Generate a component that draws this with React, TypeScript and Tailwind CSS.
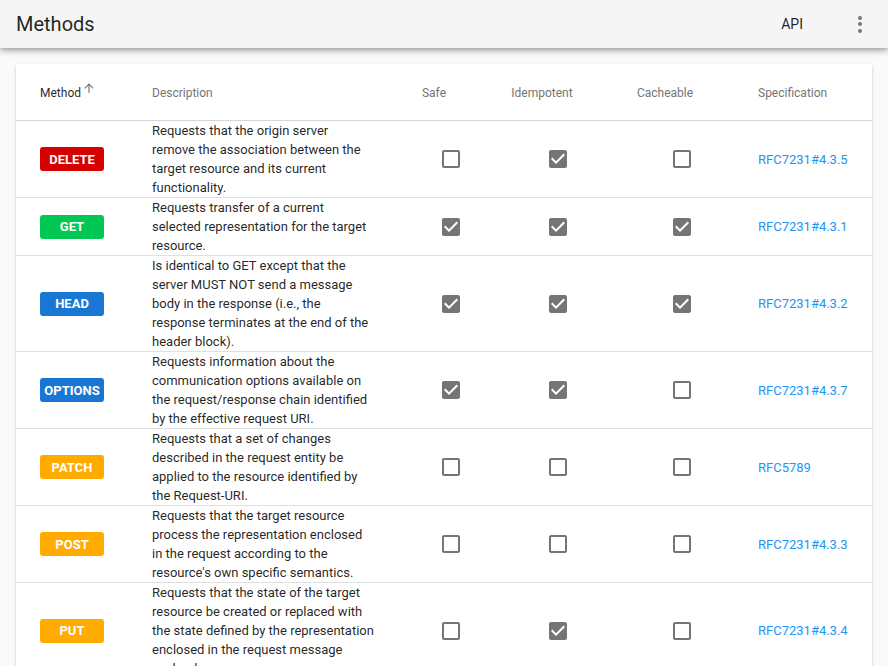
import React from "react";

type Row = {
  method: string;
  color: string;
  desc: string;
  safe: boolean;
  idem: boolean;
  cache: boolean;
  spec: string;
};

const rows: Row[] = [
  {
    method: "DELETE",
    color: "bg-[#d50000]",
    desc: "Requests that the origin server remove the association between the target resource and its current functionality.",
    safe: false,
    idem: true,
    cache: false,
    spec: "RFC7231#4.3.5",
  },
  {
    method: "GET",
    color: "bg-[#00c853]",
    desc: "Requests transfer of a current selected representation for the target resource.",
    safe: true,
    idem: true,
    cache: true,
    spec: "RFC7231#4.3.1",
  },
  {
    method: "HEAD",
    color: "bg-[#1976d2]",
    desc: "Is identical to GET except that the server MUST NOT send a message body in the response (i.e., the response terminates at the end of the header block).",
    safe: true,
    idem: true,
    cache: true,
    spec: "RFC7231#4.3.2",
  },
  {
    method: "OPTIONS",
    color: "bg-[#1976d2]",
    desc: "Requests information about the communication options available on the request/response chain identified by the effective request URI.",
    safe: true,
    idem: true,
    cache: false,
    spec: "RFC7231#4.3.7",
  },
  {
    method: "PATCH",
    color: "bg-[#ffab00]",
    desc: "Requests that a set of changes described in the request entity be applied to the resource identified by the Request-URI.",
    safe: false,
    idem: false,
    cache: false,
    spec: "RFC5789",
  },
  {
    method: "POST",
    color: "bg-[#ffab00]",
    desc: "Requests that the target resource process the representation enclosed in the request according to the resource's own specific semantics.",
    safe: false,
    idem: false,
    cache: false,
    spec: "RFC7231#4.3.3",
  },
  {
    method: "PUT",
    color: "bg-[#ffab00]",
    desc: "Requests that the state of the target resource be created or replaced with the state defined by the representation enclosed in the request message payload.",
    safe: false,
    idem: true,
    cache: false,
    spec: "RFC7231#4.3.4",
  },
];

function Check({ on }: { on: boolean }) {
  return (
    <svg width="24" height="24" viewBox="0 0 24 24" className="fill-[#757575]">
      {on ? (
        <path d="M19 3H5c-1.11 0-2 .9-2 2v14c0 1.1.89 2 2 2h14c1.11 0 2-.9 2-2V5c0-1.1-.89-2-2-2zm-9 14l-5-5 1.41-1.41L10 14.17l7.59-7.59L19 8l-9 9z" />
      ) : (
        <path d="M19 5v14H5V5h14m0-2H5c-1.1 0-2 .9-2 2v14c0 1.1.9 2 2 2h14c1.1 0 2-.9 2-2V5c0-1.1-.9-2-2-2z" />
      )}
    </svg>
  );
}

const cols = "grid grid-cols-[120px_256px_118px_96px_152px_1fr]";

export default function App() {
  return (
    <div className="min-h-screen bg-[#fafafa] font-['Roboto',sans-serif] text-[rgba(0,0,0,0.87)]">
      <header className="h-12 bg-[#f5f5f5] flex items-center pl-4 shadow-[0_2px_4px_-1px_rgba(0,0,0,0.2),0_4px_5px_0_rgba(0,0,0,0.14),0_1px_10px_0_rgba(0,0,0,0.12)] relative z-10">
        <h1 className="text-[20px] leading-none font-normal flex-1">Methods</h1>
        <span className="text-[14px] font-normal mr-[33px]">API</span>
        <button className="w-12 h-12 mr-1 flex flex-col items-center justify-center gap-[2.5px]">
          <span className="w-1 h-1 rounded-full bg-[#757575]" />
          <span className="w-1 h-1 rounded-full bg-[#757575]" />
          <span className="w-1 h-1 rounded-full bg-[#757575]" />
        </button>
      </header>
      <main className="pt-4 px-4">
        <div className="bg-white rounded-[2px] shadow-[0_1px_3px_0_rgba(0,0,0,0.2),0_1px_1px_0_rgba(0,0,0,0.14),0_2px_1px_-1px_rgba(0,0,0,0.12)]">
          <div className={`${cols} h-[57px] items-center pt-[1px] text-[12px] text-[#757575] border-b border-[#d6d6d6]`}>
            <div className="pl-6 flex items-center text-[rgba(0,0,0,0.87)]">
              <span>Method</span>
              <svg width="14" height="14" viewBox="0 0 24 24" className="fill-[#757575] ml-[1px] -mt-[9px]">
                <path d="M4 12l1.41 1.41L11 7.83V20h2V7.83l5.58 5.59L20 12l-8-8-8 8z" />
              </svg>
            </div>
            <div className="pl-4">Description</div>
            <div className="flex justify-center">
              <span>Safe</span>
              <span className="w-[34px]" />
            </div>
            <div className="flex justify-center">
              <span>Idempotent</span>
              <span className="w-[32px]" />
            </div>
            <div className="flex justify-center">
              <span>Cacheable</span>
              <span className="w-[34px]" />
            </div>
            <div>Specification</div>
          </div>
          {rows.map((r) => (
            <div key={r.method} className={`${cols} items-center border-b border-[#e0e0e0] text-[13px] leading-[19px]`}>
              <div className="pl-6">
                <span
                  className={`${r.color} w-16 h-6 rounded-[3px] flex items-center justify-center text-white text-[13px] font-bold font-['Roboto',sans-serif]`}
                >
                  {r.method}
                </span>
              </div>
              <div className="pl-4 pr-[18px]">{r.desc}</div>
              <div className="flex justify-center">
                <Check on={r.safe} />
              </div>
              <div className="flex justify-center">
                <Check on={r.idem} />
              </div>
              <div className="flex justify-center">
                <Check on={r.cache} />
              </div>
              <div>
                <a className="text-[#2196f3]" href="#">
                  {r.spec}
                </a>
              </div>
            </div>
          ))}
        </div>
      </main>
    </div>
  );
}
